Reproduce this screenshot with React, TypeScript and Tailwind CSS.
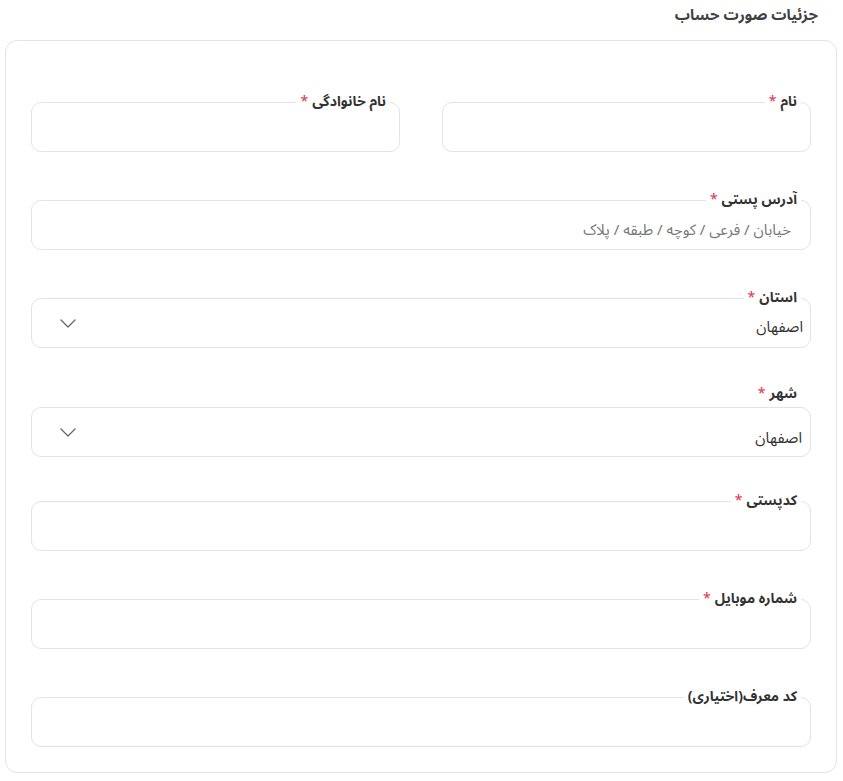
import React from "react";

const font = { fontFamily: "'Noto Sans Arabic', 'DejaVu Sans', sans-serif" };

function Chevron({ cls }: { cls: string }) {
  return (
    <svg width="16" height="9" viewBox="0 0 16 9" fill="none" className={cls}>
      <path d="M1 1l7 7 7-7" stroke="#666" strokeWidth="1.3" strokeLinecap="round" strokeLinejoin="round" />
    </svg>
  );
}

function Label({ text, required = true }: { text: string; required?: boolean }) {
  return (
    <>
      {text}
      {required && <span className="text-[#e0304e] font-normal mr-1">*</span>}
    </>
  );
}

function Field({
  label,
  required = true,
  placeholder,
  value,
  select,
}: {
  label: string;
  required?: boolean;
  placeholder?: string;
  value?: string;
  select?: boolean;
}) {
  return (
    <fieldset className="border border-[#e3e3e3] rounded-[10px] px-[9px] min-w-0">
      <legend className="px-1 text-[14px] font-bold leading-5 text-[#333]">
        <Label text={label} required={required} />
      </legend>
      <div className="h-[39px] flex items-center justify-between">
        {select ? (
          <>
            <span className="text-[15px] text-[#333] -mr-[2px]">{value}</span>
            <Chevron cls="mb-2 ml-[19px] shrink-0" />
          </>
        ) : (
          <input
            className="w-full h-full bg-transparent outline-none text-[15px] text-[#333] pr-[10px] placeholder:text-[#777]"
            placeholder={placeholder}
          />
        )}
      </div>
    </fieldset>
  );
}

export default function App() {
  return (
    <div dir="rtl" style={font} className="bg-white w-[843px] min-h-[781px] pl-[5px] pr-[6px]">
      <div className="h-[40px] pr-[19px] pt-[3px]">
        <h2 className="text-[15px] font-bold text-[#404040] leading-6">جزئیات صورت حساب</h2>
      </div>
      <div className="border border-[#e3e3e3] rounded-[12px] px-[25px] pt-[51px] pb-[25px] flex flex-col">
        <div className="grid grid-cols-2 gap-[42px]">
          <Field label="نام" />
          <Field label="نام خانوادگی" />
        </div>
        <div className="mt-[38px]">
          <Field label="آدرس پستی" placeholder="خیابان / فرعی / کوچه / طبقه / پلاک" />
        </div>
        <div className="mt-[38px]">
          <Field label="استان" value="اصفهان" select />
        </div>
        <div className="mt-[36px]">
          <div className="text-[14px] font-bold leading-5 text-[#333] pr-[14px]">
            <Label text="شهر" />
          </div>
          <div className="mt-[3px] border border-[#e3e3e3] rounded-[10px] pr-[8px] h-[50px] flex items-center justify-between">
            <span className="text-[15px] text-[#333] mt-3">اصفهان</span>
            <Chevron cls="ml-[28px] shrink-0" />
          </div>
        </div>
        <div className="mt-[34px]">
          <Field label="کدپستی" />
        </div>
        <div className="mt-[38px]">
          <Field label="شماره موبایل" />
        </div>
        <div className="mt-[38px]">
          <Field label="کد معرف(اختیاری)" required={false} />
        </div>
      </div>
    </div>
  );
}
